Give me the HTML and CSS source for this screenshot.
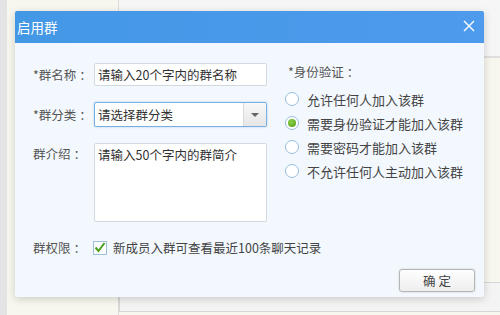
FILE: index.html
```html
<!DOCTYPE html>
<html lang="zh-CN">

<head>
    <meta charset="UTF-8">
    <title>启用群</title>
    <link rel="stylesheet" href="styles.css">
</head>

<body>
    <div class="desk">
        <div class="strip"></div>
        <div class="side"></div>
        <div class="main">
            <div class="main-top"></div>
            <div class="main-mid"></div>
            <div class="main-box"></div>
        </div>

        <!-- dialog window -->
        <div class="dialog">
            <div class="dialog-head">
                <span class="dialog-title">启用群</span>
                <svg class="close" width="12" height="12" viewBox="0 0 12 12">
                    <path d="M1 1 L11 11 M11 1 L1 11" stroke="#fff" stroke-width="1.4" fill="none" />
                </svg>
            </div>
            <div class="dialog-body">
                <div class="cols">
                    <div class="form">
                        <label class="lbl">*群名称<span class="colon">：</span></label>
                        <div class="field text">请输入20个字内的群名称</div>

                        <label class="lbl">*群分类<span class="colon">：</span></label>
                        <div class="field select">
                            <span class="sel-text">请选择群分类</span>
                            <span class="sel-arrow"><i></i></span>
                        </div>

                        <label class="lbl top">群介绍<span class="colon">：</span></label>
                        <div class="field area">请输入50个字内的群简介</div>
                    </div>

                    <div class="verify">
                        <div class="verify-title">*身份验证<span class="colon">：</span></div>
                        <div class="radio"><span class="dot"></span>允许任何人加入该群</div>
                        <div class="radio"><span class="dot on"></span>需要身份验证才能加入该群</div>
                        <div class="radio"><span class="dot"></span>需要密码才能加入该群</div>
                        <div class="radio"><span class="dot"></span>不允许任何人主动加入该群</div>
                    </div>
                </div>

                <div class="perm">
                    <span class="lbl perm-lbl">群权限<span class="colon">：</span></span>
                    <span class="check">
                        <svg width="12" height="11" viewBox="0 0 12 11">
                            <path d="M1.5 5.5 L4.5 9 L10.5 1" stroke="#4a9e1f" stroke-width="2" fill="none" />
                        </svg>
                    </span>
                    <span class="perm-text">新成员入群可查看最近100条聊天记录</span>
                </div>

                <div class="actions">
                    <button class="btn">确 定</button>
                </div>
            </div>
        </div>
    </div>
</body>

</html>
```

FILE: styles.css
```css
body {
    margin: 0;
    font-family: "Noto Sans CJK SC", "Liberation Sans", sans-serif;
    font-size: 12.5px;
    color: #444;
}

.desk {
    position: relative;
    display: flex;
    width: 500px;
    height: 315px;
    overflow: hidden;
    background-color: #f8f7ef;
}

.strip {
    width: 7px;
    background-color: #e4e4e4;
}

.side {
    width: 111px;
    background-color: #f8f7ef;
    border-right: 1px solid #dcdcd6;
}

.main {
    flex: 1;
    display: flex;
    flex-direction: column;
}

.main-top {
    height: 56px;
    background-color: #f6f6f6;
    border-bottom: 2px solid #dedede;
}

.main-mid {
    flex: 1;
}

.main-box {
    height: 28px;
    margin-bottom: 3px;
    background-color: #f4f4f4;
    border: 1px solid #d6d6d6;
    border-right: none;
}

/* dialog */

.dialog {
    position: absolute;
    left: 15px;
    top: 11px;
    width: 469px;
    height: 286px;
    display: flex;
    flex-direction: column;
    background-color: #f3f8fe;
    box-shadow: 0 2px 8px rgba(0, 0, 0, 0.18);
    border-radius: 2px;
}

.dialog-head {
    height: 32px;
    display: flex;
    align-items: center;
    justify-content: space-between;
    padding: 0 9px 0 2px;
    background: linear-gradient(to right, #4398e6, #4e9aec);
    border-radius: 2px 2px 0 0;
}

.dialog-title {
    color: #fff;
    font-size: 13.5px;
}

.close {
    margin-top: -2px;
}

.dialog-body {
    flex: 1;
    display: flex;
    flex-direction: column;
    padding: 20px 9px 5px 18px;
}

.cols {
    display: flex;
}

.form {
    display: grid;
    grid-template-columns: 61px 173px;
    grid-template-rows: 23px 25px 79px;
    row-gap: 16px;
    align-items: center;
}

.lbl {
    color: #555;
    white-space: nowrap;
}

.colon {
    margin-left: 3px;
}

.lbl.top {
    align-self: start;
    padding-top: 1px;
}

.field {
    box-sizing: border-box;
    height: 100%;
    background-color: #fff;
    border: 1px solid #d3d9e1;
    border-radius: 2px;
    color: #333;
    padding: 0 3px;
}

.text {
    display: flex;
    align-items: center;
}

.select {
    display: flex;
    align-items: center;
    justify-content: space-between;
    padding: 0 0 0 3px;
    border-color: #79b0e2;
    box-shadow: 0 0 2px rgba(80, 150, 220, 0.5);
}

.sel-arrow {
    width: 22px;
    height: 100%;
    display: flex;
    align-items: center;
    justify-content: center;
    background: linear-gradient(#f8f8f8, #e6e6e6);
    border-left: 1px solid #d8d8d8;
}

.sel-arrow i {
    width: 0;
    height: 0;
    border-left: 4px solid transparent;
    border-right: 4px solid transparent;
    border-top: 4px solid #666;
}

.area {
    padding-top: 2px;
    line-height: 18px;
}

.verify {
    margin-left: 18px;
    margin-top: -1px;
    white-space: nowrap;
}

.verify-title {
    color: #555;
    margin-left: 3px;
    margin-bottom: 6px;
}

.radio {
    display: flex;
    align-items: center;
    height: 24px;
    font-size: 13px;
    color: #444;
}

.dot {
    box-sizing: border-box;
    width: 14px;
    height: 14px;
    margin-right: 8px;
    border: 1px solid #98bcd9;
    border-radius: 50%;
    background-color: #fff;
    display: flex;
    align-items: center;
    justify-content: center;
}

.dot.on::after {
    content: "";
    width: 8px;
    height: 8px;
    border-radius: 50%;
    background: radial-gradient(circle at 40% 35%, #8cd34a, #4e9a16);
}

.perm {
    display: flex;
    align-items: center;
    margin-top: 16px;
}

.perm-lbl {
    width: 60px;
}

.check {
    box-sizing: border-box;
    width: 14px;
    height: 14px;
    margin-right: 6px;
    border: 1px solid #9fc0dc;
    background-color: #fff;
    display: flex;
    align-items: center;
    justify-content: center;
}

.perm-text {
    color: #444;
}

.actions {
    margin-top: auto;
    display: flex;
    justify-content: flex-end;
}

.btn {
    width: 76px;
    height: 23px;
    font-family: inherit;
    font-size: 12.5px;
    color: #444;
    background: linear-gradient(#fefefe, #eeeeee);
    border: 1px solid #b5b5b5;
    border-radius: 3px;
    box-shadow: 0 0 2px rgba(0, 0, 0, 0.2);
    padding: 0;
}
```
